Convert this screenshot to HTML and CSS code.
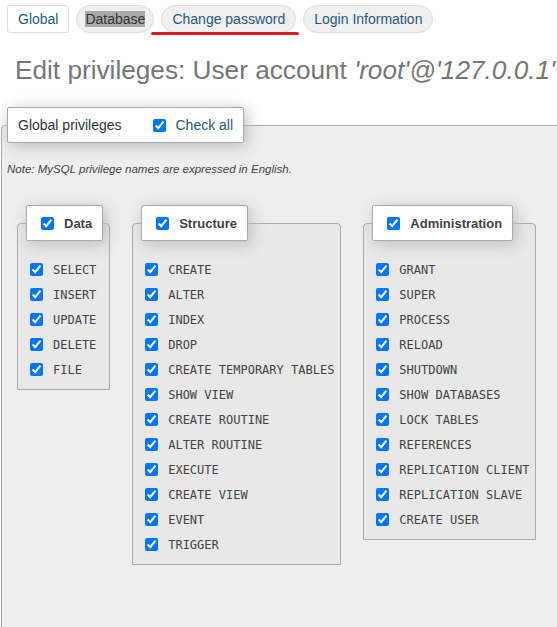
FILE: index.html
```html
<!DOCTYPE html>
<html>
<head>
<meta charset="utf-8">
<link rel="stylesheet" href="styles.css">
</head>
<body>
<nav class="tabs">
  <a class="tab tab-plain">Global</a>
  <a class="tab tab-pill"><span class="hl">Database</span></a>
  <a class="tab tab-pill tab-marked">Change password</a>
  <a class="tab tab-pill">Login Information</a>
</nav>
<h2 class="title">Edit privileges: User account <i>'root'@'127.0.0.1'</i></h2>
<fieldset class="outer">
  <legend class="outer-legend">
    <span class="legend-title">Global privileges</span>
    <input type="checkbox" class="cb" checked>
    <span class="checkall">Check all</span>
  </legend>
  <p class="note">Note: MySQL privilege names are expressed in English.</p>
  <div class="groups">
    <fieldset class="group">
      <legend class="group-legend"><input type="checkbox" class="cb" checked><span>Data</span></legend>
      <div class="row"><input type="checkbox" class="cb" checked><code>SELECT</code></div>
      <div class="row"><input type="checkbox" class="cb" checked><code>INSERT</code></div>
      <div class="row"><input type="checkbox" class="cb" checked><code>UPDATE</code></div>
      <div class="row"><input type="checkbox" class="cb" checked><code>DELETE</code></div>
      <div class="row"><input type="checkbox" class="cb" checked><code>FILE</code></div>
    </fieldset>
    <fieldset class="group">
      <legend class="group-legend"><input type="checkbox" class="cb" checked><span>Structure</span></legend>
      <div class="row"><input type="checkbox" class="cb" checked><code>CREATE</code></div>
      <div class="row"><input type="checkbox" class="cb" checked><code>ALTER</code></div>
      <div class="row"><input type="checkbox" class="cb" checked><code>INDEX</code></div>
      <div class="row"><input type="checkbox" class="cb" checked><code>DROP</code></div>
      <div class="row"><input type="checkbox" class="cb" checked><code>CREATE TEMPORARY TABLES</code></div>
      <div class="row"><input type="checkbox" class="cb" checked><code>SHOW VIEW</code></div>
      <div class="row"><input type="checkbox" class="cb" checked><code>CREATE ROUTINE</code></div>
      <div class="row"><input type="checkbox" class="cb" checked><code>ALTER ROUTINE</code></div>
      <div class="row"><input type="checkbox" class="cb" checked><code>EXECUTE</code></div>
      <div class="row"><input type="checkbox" class="cb" checked><code>CREATE VIEW</code></div>
      <div class="row"><input type="checkbox" class="cb" checked><code>EVENT</code></div>
      <div class="row"><input type="checkbox" class="cb" checked><code>TRIGGER</code></div>
    </fieldset>
    <fieldset class="group">
      <legend class="group-legend"><input type="checkbox" class="cb" checked><span>Administration</span></legend>
      <div class="row"><input type="checkbox" class="cb" checked><code>GRANT</code></div>
      <div class="row"><input type="checkbox" class="cb" checked><code>SUPER</code></div>
      <div class="row"><input type="checkbox" class="cb" checked><code>PROCESS</code></div>
      <div class="row"><input type="checkbox" class="cb" checked><code>RELOAD</code></div>
      <div class="row"><input type="checkbox" class="cb" checked><code>SHUTDOWN</code></div>
      <div class="row"><input type="checkbox" class="cb" checked><code>SHOW DATABASES</code></div>
      <div class="row"><input type="checkbox" class="cb" checked><code>LOCK TABLES</code></div>
      <div class="row"><input type="checkbox" class="cb" checked><code>REFERENCES</code></div>
      <div class="row"><input type="checkbox" class="cb" checked><code>REPLICATION CLIENT</code></div>
      <div class="row"><input type="checkbox" class="cb" checked><code>REPLICATION SLAVE</code></div>
      <div class="row"><input type="checkbox" class="cb" checked><code>CREATE USER</code></div>
    </fieldset>
  </div>
</fieldset>
</body>
</html>
```

FILE: styles.css
```css
html, body {
  overflow: hidden;
}
body {
  margin: 0;
  width: 640px;
  font-family: "Liberation Sans", Arial, sans-serif;
  color: #444;
  background: #fff;
}
.tabs {
  display: flex;
  gap: 7px;
  padding: 5px 0 0 7px;
}
.tab {
  position: relative;
  display: block;
  font-size: 14px;
  line-height: 16px;
  padding: 5px 10px;
  border: 1px solid #ddd;
  color: #235a81;
  white-space: nowrap;
}
.tab-plain {
  background: #fff;
  border-radius: 3px;
}
.tab-pill {
  background: #f0f0f0;
  border-radius: 16px;
}
.tab-pill:nth-child(2) {
  padding: 5px 8px;
}
.hl {
  background: #aaa;
  color: #333;
}
.tab-marked::after {
  content: "";
  position: absolute;
  left: -11px;
  right: -4px;
  top: 26px;
  height: 3px;
  border-radius: 2px;
  background: #e3191f;
}
.title {
  margin: 21px 0 0 0;
  padding-left: 15px;
  font-size: 26.2px;
  line-height: 32px;
  font-weight: normal;
  color: #777;
  white-space: nowrap;
}
.outer {
  margin: 21px 0 0 1px;
  padding: 0 5px 60px 5px;
  border: 1px solid #aaa;
  border-radius: 4px 4px 0 0;
  background: #eee;
  min-height: 470px;
  min-width: 0;
}
.outer-legend {
  display: flex;
  align-items: center;
  height: 34px;
  padding: 0 10px;
  border: 1px solid #aaa;
  border-radius: 2px;
  background: #fff;
  box-shadow: 3px 3px 15px #bbb;
  font-size: 14px;
  color: #333;
}
.legend-title {
  margin-right: 27px;
}
.checkall {
  margin-left: 7px;
  color: #235a81;
}
.cb {
  width: 13px;
  height: 13px;
  margin: 0 3px 0 4px;
  flex: none;
}
.note {
  margin: 19px 0 0 0;
  font-size: 11.5px;
  font-style: italic;
  line-height: 14px;
  color: #444;
}
.groups {
  display: flex;
  align-items: flex-start;
  gap: 22px;
  margin-left: 10px;
  margin-top: 29px;
}
.group {
  margin: 0;
  padding: 16px 6px 7px 8px;
  border: 1px solid #aaa;
  border-radius: 4px 4px 0 0;
  background: #e8e8e8;
  min-width: 0;
}
.group-legend {
  display: flex;
  align-items: center;
  height: 34px;
  padding: 0 10px;
  border: 1px solid #aaa;
  border-radius: 2px;
  background: #fff;
  box-shadow: 3px 3px 15px #bbb;
  font-size: 13px;
  font-weight: bold;
  color: #444;
}
.group-legend span {
  margin-left: 7px;
}
.row {
  display: flex;
  align-items: center;
  height: 25px;
}
.row code {
  margin-left: 7px;
  font-family: "DejaVu Sans Mono", monospace;
  font-size: 12px;
  color: #444;
  white-space: nowrap;
}
```
